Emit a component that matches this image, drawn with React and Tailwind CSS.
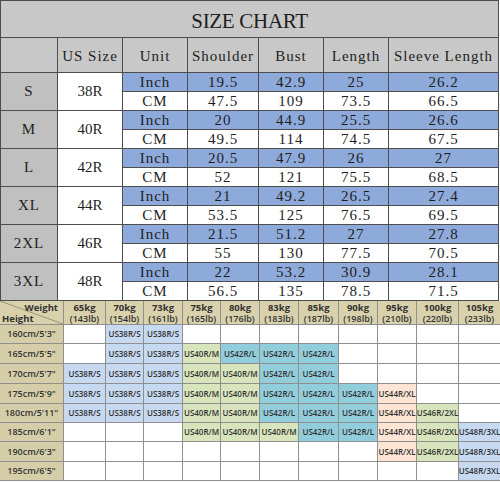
import React from "react";

const sizes = [
  ["S", "38R", ["19.5", "42.9", "25", "26.2"], ["47.5", "109", "73.5", "66.5"]],
  ["M", "40R", ["20", "44.9", "25.5", "26.6"], ["49.5", "114", "74.5", "67.5"]],
  ["L", "42R", ["20.5", "47.9", "26", "27"], ["52", "121", "75.5", "68.5"]],
  ["XL", "44R", ["21", "49.2", "26.5", "27.4"], ["53.5", "125", "76.5", "69.5"]],
  ["2XL", "46R", ["21.5", "51.2", "27", "27.8"], ["55", "130", "77.5", "70.5"]],
  ["3XL", "48R", ["22", "53.2", "30.9", "28.1"], ["56.5", "135", "78.5", "71.5"]],
];

const weights = [
  ["65kg", "(143lb)"],
  ["70kg", "(154lb)"],
  ["73kg", "(161lb)"],
  ["75kg", "(165lb)"],
  ["80kg", "(176lb)"],
  ["83kg", "(183lb)"],
  ["85kg", "(187lb)"],
  ["90kg", "(198lb)"],
  ["95kg", "(210lb)"],
  ["100kg", "(220lb)"],
  ["105kg", "(233lb)"],
];

const S = "US38R/S";
const M = "US40R/M";
const L = "US42R/L";
const XL = "US44R/XL";
const X2 = "US46R/2XL";
const X3 = "US48R/3XL";
const _ = "";

const rows = [
  ["160cm/5'3\"", [_, S, S, _, _, _, _, _, _, _, _]],
  ["165cm/5'5\"", [_, S, S, M, L, L, L, _, _, _, _]],
  ["170cm/5'7\"", [S, S, S, M, M, L, L, _, _, _, _]],
  ["175cm/5'9\"", [S, S, S, M, M, L, L, L, XL, _, _]],
  ["180cm/5'11\"", [S, S, S, M, M, L, L, L, XL, X2, _]],
  ["185cm/6'1\"", [_, _, _, M, M, M, L, L, XL, X2, X3]],
  ["190cm/6'3\"", [_, _, _, _, _, _, _, _, XL, X2, X3]],
  ["195cm/6'5\"", [_, _, _, _, _, _, _, _, _, _, X3]],
];

const cellBg = {
  [S]: "bg-[#c6d9f1]",
  [M]: "bg-[#d8e4bc]",
  [L]: "bg-[#92cddc]",
  [XL]: "bg-[#fde4d5]",
  [X2]: "bg-[#d8e4bc]",
  [X3]: "bg-[#c6d9f1]",
  "": "bg-white",
};

function TopCell({ children, className = "" }) {
  return (
    <div className={`flex items-center justify-center ${className}`}>{children}</div>
  );
}

export default function App() {
  return (
    <div className="w-[500px] h-[482px] bg-white overflow-hidden">
      {/* Top size chart */}
      <div className="w-[499px] grid grid-cols-[56px_64px_64px_70px_64px_64px_109px] grid-rows-[36px_34px_repeat(12,18px)] gap-px p-px bg-[#4d4d4d] font-['Liberation_Serif',serif] text-[#1e1e1e] text-[15px] tracking-[1px]">
        <div className="col-span-7 bg-[#c8c8c8] flex items-center justify-center pt-[5px] text-[21px] tracking-[-0.3px]">
          SIZE CHART
        </div>
        <TopCell className="bg-[#c8c8c8]" />
        <TopCell className="bg-[#c8c8c8] pt-[2px]">US Size</TopCell>
        <TopCell className="bg-[#c8c8c8] pt-[2px]">Unit</TopCell>
        <TopCell className="bg-[#c8c8c8] pt-[2px]">Shoulder</TopCell>
        <TopCell className="bg-[#c8c8c8] pt-[2px]">Bust</TopCell>
        <TopCell className="bg-[#c8c8c8] pt-[2px]">Length</TopCell>
        <TopCell className="bg-[#c8c8c8] pt-[2px]">Sleeve Length</TopCell>
        {sizes.map(([size, us, inch, cm]) => (
          <React.Fragment key={size}>
            <TopCell className="row-span-2 bg-[#c0c0c0]">{size}</TopCell>
            <TopCell className="row-span-2 bg-white tracking-normal">{us}</TopCell>
            <TopCell className="bg-[#8eaadb]">Inch</TopCell>
            {inch.map((v, i) => (
              <TopCell key={"i" + i} className="bg-[#8eaadb]">{v}</TopCell>
            ))}
            <TopCell className="bg-white">CM</TopCell>
            {cm.map((v, i) => (
              <TopCell key={"c" + i} className="bg-white">{v}</TopCell>
            ))}
          </React.Fragment>
        ))}
      </div>

      {/* Bottom height/weight chart */}
      <div className="w-[500px] grid grid-cols-[63px_41px_37px_38px_37px_38px_38px_39px_38px_38px_41px_41px] grid-rows-[23px_18px_19px_19px_19px_18px_18px_19px_18px] gap-px pb-px bg-[#8f8f8f] font-['Open_Sans',sans-serif] text-[#333333]">
        <div className="relative bg-[#d8d1ab] text-[9.5px] font-bold leading-none">
          <svg className="absolute inset-0" width="63" height="23" viewBox="0 0 63 23">
            <line x1="0" y1="0" x2="63" y2="23" stroke="#8a8570" strokeWidth="0.8" />
          </svg>
          <span className="absolute right-[5px] top-[2px]">Weight</span>
          <span className="absolute left-[2px] bottom-[1px]">Height</span>
        </div>
        {weights.map(([kg, lb]) => (
          <div
            key={kg}
            className="bg-[#d8d1ab] flex flex-col items-center justify-center font-bold leading-[11px]"
          >
            <span className="text-[9.5px]">{kg}</span>
            <span className="text-[9px] font-semibold">{lb}</span>
          </div>
        ))}
        {rows.map(([h, cells]) => (
          <React.Fragment key={h}>
            <div className="bg-[#d5cea9] flex items-center justify-center text-[9px] font-semibold">
              {h}
            </div>
            {cells.map((c, i) => (
              <div
                key={i}
                className={`${cellBg[c]} flex items-center justify-center text-[8px] font-semibold whitespace-nowrap`}
              >
                {c}
              </div>
            ))}
          </React.Fragment>
        ))}
      </div>
    </div>
  );
}
